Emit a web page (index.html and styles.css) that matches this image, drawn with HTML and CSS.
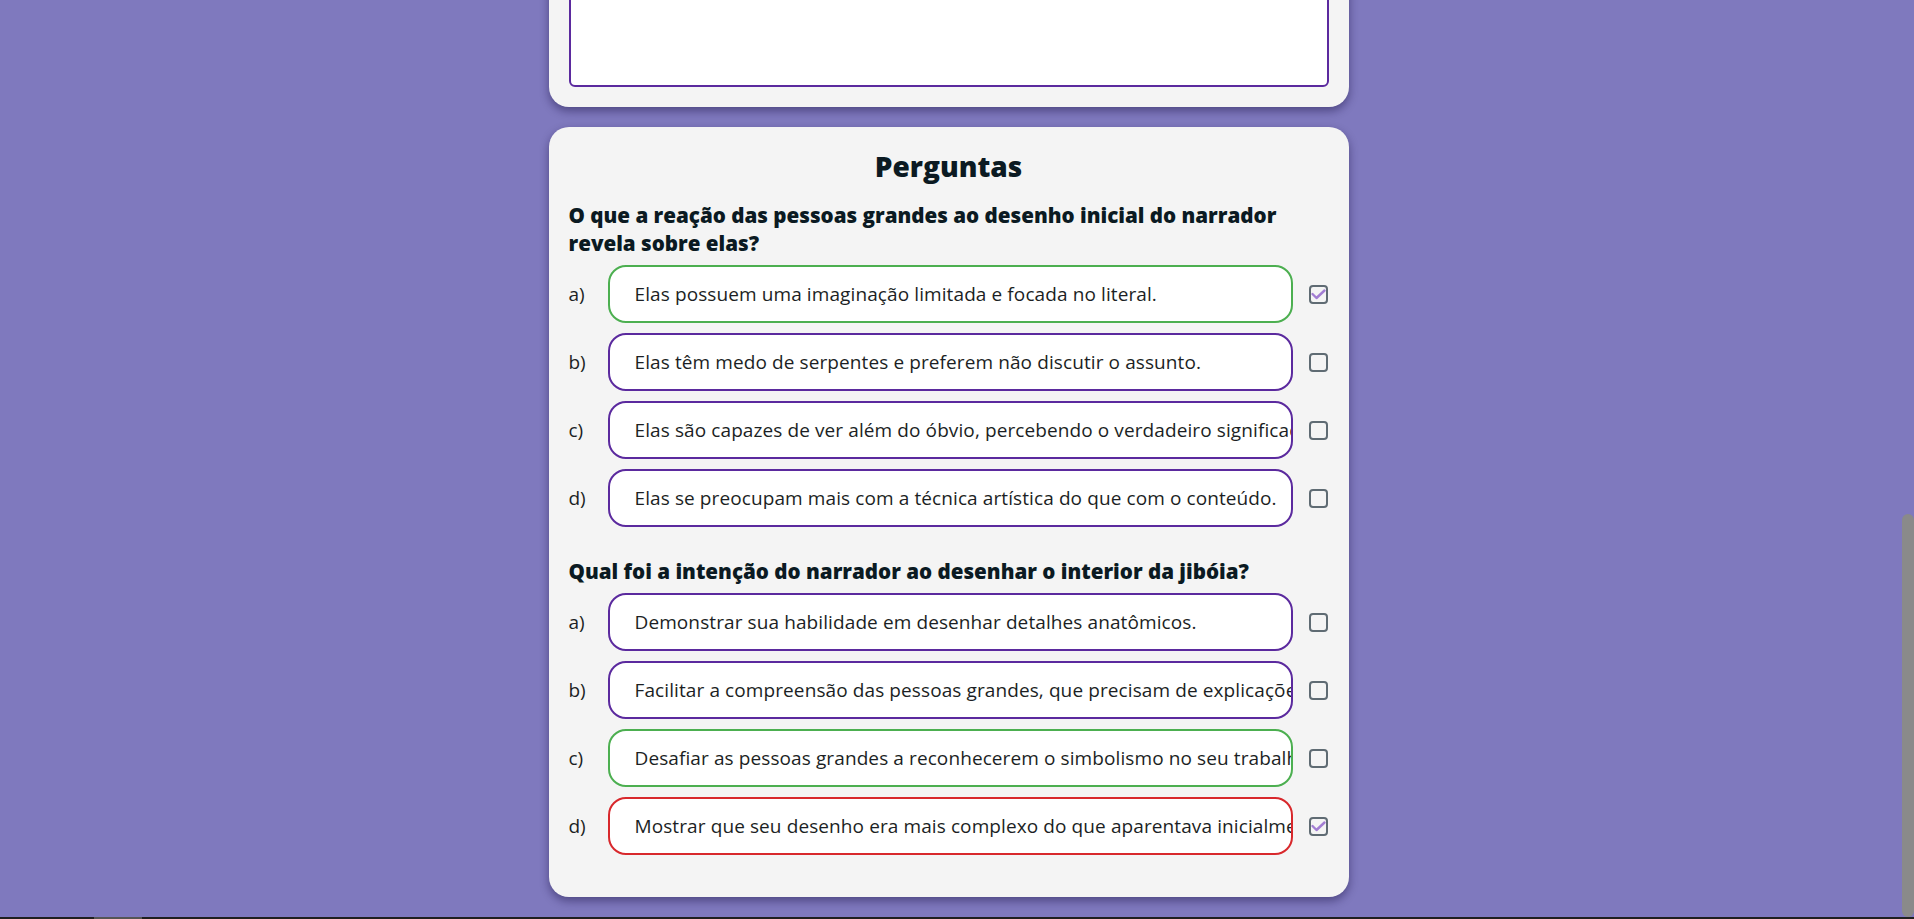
FILE: index.html
```html
<!DOCTYPE html>
<html lang="pt-BR">
<head>
<meta charset="utf-8">
<title>Perguntas</title>
<link rel="stylesheet" href="styles.css">
</head>
<body>
<main class="page">
  <section class="card card-text">
    <textarea class="answer" aria-label="Resposta"></textarea>
  </section>

  <section class="card card-quiz">
    <h2 class="quiz-title">Perguntas</h2>

    <div class="question">
      <h3 class="q-text">O que a reação das pessoas grandes ao desenho inicial do narrador revela sobre elas?</h3>
      <div class="options">
        <div class="option">
          <span class="opt-label">a)</span>
          <div class="opt-box correct">Elas possuem uma imaginação limitada e focada no literal.</div>
          <span class="check"><svg width="19" height="19" viewBox="0 0 19 19"><rect x="1" y="1" width="17" height="17" rx="3" class="box"/><path d="M3.5 9 L7.5 13 L15.5 5.5" class="tick"/></svg></span>
        </div>
        <div class="option">
          <span class="opt-label">b)</span>
          <div class="opt-box">Elas têm medo de serpentes e preferem não discutir o assunto.</div>
          <span class="check"><svg width="19" height="19" viewBox="0 0 19 19"><rect x="1" y="1" width="17" height="17" rx="3" class="box"/></svg></span>
        </div>
        <div class="option">
          <span class="opt-label">c)</span>
          <div class="opt-box">Elas são capazes de ver além do óbvio, percebendo o verdadeiro significado do desenho.</div>
          <span class="check"><svg width="19" height="19" viewBox="0 0 19 19"><rect x="1" y="1" width="17" height="17" rx="3" class="box"/></svg></span>
        </div>
        <div class="option">
          <span class="opt-label">d)</span>
          <div class="opt-box">Elas se preocupam mais com a técnica artística do que com o conteúdo.</div>
          <span class="check"><svg width="19" height="19" viewBox="0 0 19 19"><rect x="1" y="1" width="17" height="17" rx="3" class="box"/></svg></span>
        </div>
      </div>
    </div>

    <div class="question">
      <h3 class="q-text">Qual foi a intenção do narrador ao desenhar o interior da jibóia?</h3>
      <div class="options">
        <div class="option">
          <span class="opt-label">a)</span>
          <div class="opt-box">Demonstrar sua habilidade em desenhar detalhes anatômicos.</div>
          <span class="check"><svg width="19" height="19" viewBox="0 0 19 19"><rect x="1" y="1" width="17" height="17" rx="3" class="box"/></svg></span>
        </div>
        <div class="option">
          <span class="opt-label">b)</span>
          <div class="opt-box">Facilitar a compreensão das pessoas grandes, que precisam de explicações.</div>
          <span class="check"><svg width="19" height="19" viewBox="0 0 19 19"><rect x="1" y="1" width="17" height="17" rx="3" class="box"/></svg></span>
        </div>
        <div class="option">
          <span class="opt-label">c)</span>
          <div class="opt-box correct">Desafiar as pessoas grandes a reconhecerem o simbolismo no seu trabalho.</div>
          <span class="check"><svg width="19" height="19" viewBox="0 0 19 19"><rect x="1" y="1" width="17" height="17" rx="3" class="box"/></svg></span>
        </div>
        <div class="option">
          <span class="opt-label">d)</span>
          <div class="opt-box wrong">Mostrar que seu desenho era mais complexo do que aparentava inicialmente.</div>
          <span class="check"><svg width="19" height="19" viewBox="0 0 19 19"><rect x="1" y="1" width="17" height="17" rx="3" class="box"/><path d="M3.5 9 L7.5 13 L15.5 5.5" class="tick"/></svg></span>
        </div>
      </div>
    </div>
  </section>
</main>
<div class="scroll-thumb"></div>
<div class="bottom-strip"><span class="strip-thumb"></span></div>
</body>
</html>
```

FILE: styles.css
```css
html, body {
  margin: 0;
  padding: 0;
  height: 100%;
  overflow: hidden;
}
body {
  background: #7f79be;
  font-family: "Open Sans", "Noto Sans", sans-serif;
  color: #161c22;
}
.page {
  box-sizing: border-box;
  width: 100%;
  padding-right: 17px;
  margin-top: -83px;
  display: flex;
  flex-direction: column;
  align-items: center;
  gap: 20px;
}
.card {
  box-sizing: border-box;
  width: 800px;
  background: #f4f4f4;
  border-radius: 20px;
  padding: 20px;
  box-shadow: 0 4px 10px rgba(20, 10, 60, 0.45);
}
.answer {
  display: block;
  box-sizing: border-box;
  width: 100%;
  height: 150px;
  border: 2px solid #5b2a9e;
  border-radius: 6px;
  background: #fff;
  resize: none;
  margin: 0;
}
.card-quiz {
  padding-bottom: 42px;
  display: flex;
  flex-direction: column;
}
.quiz-title {
  margin: 0 0 16px;
  text-align: center;
  font-size: 28px;
  line-height: 38px;
  font-weight: 800;
  color: #0b1a22;
}
.question + .question {
  margin-top: 30px;
}
.q-text {
  margin: 0 0 8px;
  font-size: 20.6px;
  line-height: 28px;
  font-weight: 800;
  color: #0b1a22;
}
.options {
  display: flex;
  flex-direction: column;
  gap: 10px;
}
.option {
  display: flex;
  align-items: center;
}
.opt-label {
  width: 39px;
  flex: none;
  font-size: 19px;
  color: #1c1f24;
}
.opt-box {
  flex: 1;
  min-width: 0;
  box-sizing: border-box;
  height: 58px;
  display: flex;
  align-items: center;
  padding: 0 3px 0 25px;
  border: 2px solid #5b2a9e;
  border-radius: 18px;
  background: #fff;
  white-space: nowrap;
  overflow: hidden;
  font-size: 19px;
  letter-spacing: 0.1px;
  color: #1c1f24;
}
.opt-box.correct {
  border-color: #4caf50;
}
.opt-box.wrong {
  border-color: #d8282c;
}
.check {
  flex: none;
  width: 20px;
  margin-left: 16px;
  display: flex;
}
.check .box {
  fill: none;
  stroke: #5f6b73;
  stroke-width: 2;
}
.check .tick {
  fill: none;
  stroke: #a27dd3;
  stroke-width: 2.4;
  stroke-linecap: round;
  stroke-linejoin: round;
}
.scroll-thumb {
  position: fixed;
  right: 0;
  top: 514px;
  width: 12px;
  height: 403px;
  border-radius: 6px;
  background: #8a8a8a;
}
.bottom-strip {
  position: fixed;
  left: 0;
  right: 0;
  bottom: 0;
  height: 2px;
  background: #1f1f1f;
}
.strip-thumb {
  position: absolute;
  left: 94px;
  width: 48px;
  top: 0;
  height: 2px;
  background: #555;
}
```
